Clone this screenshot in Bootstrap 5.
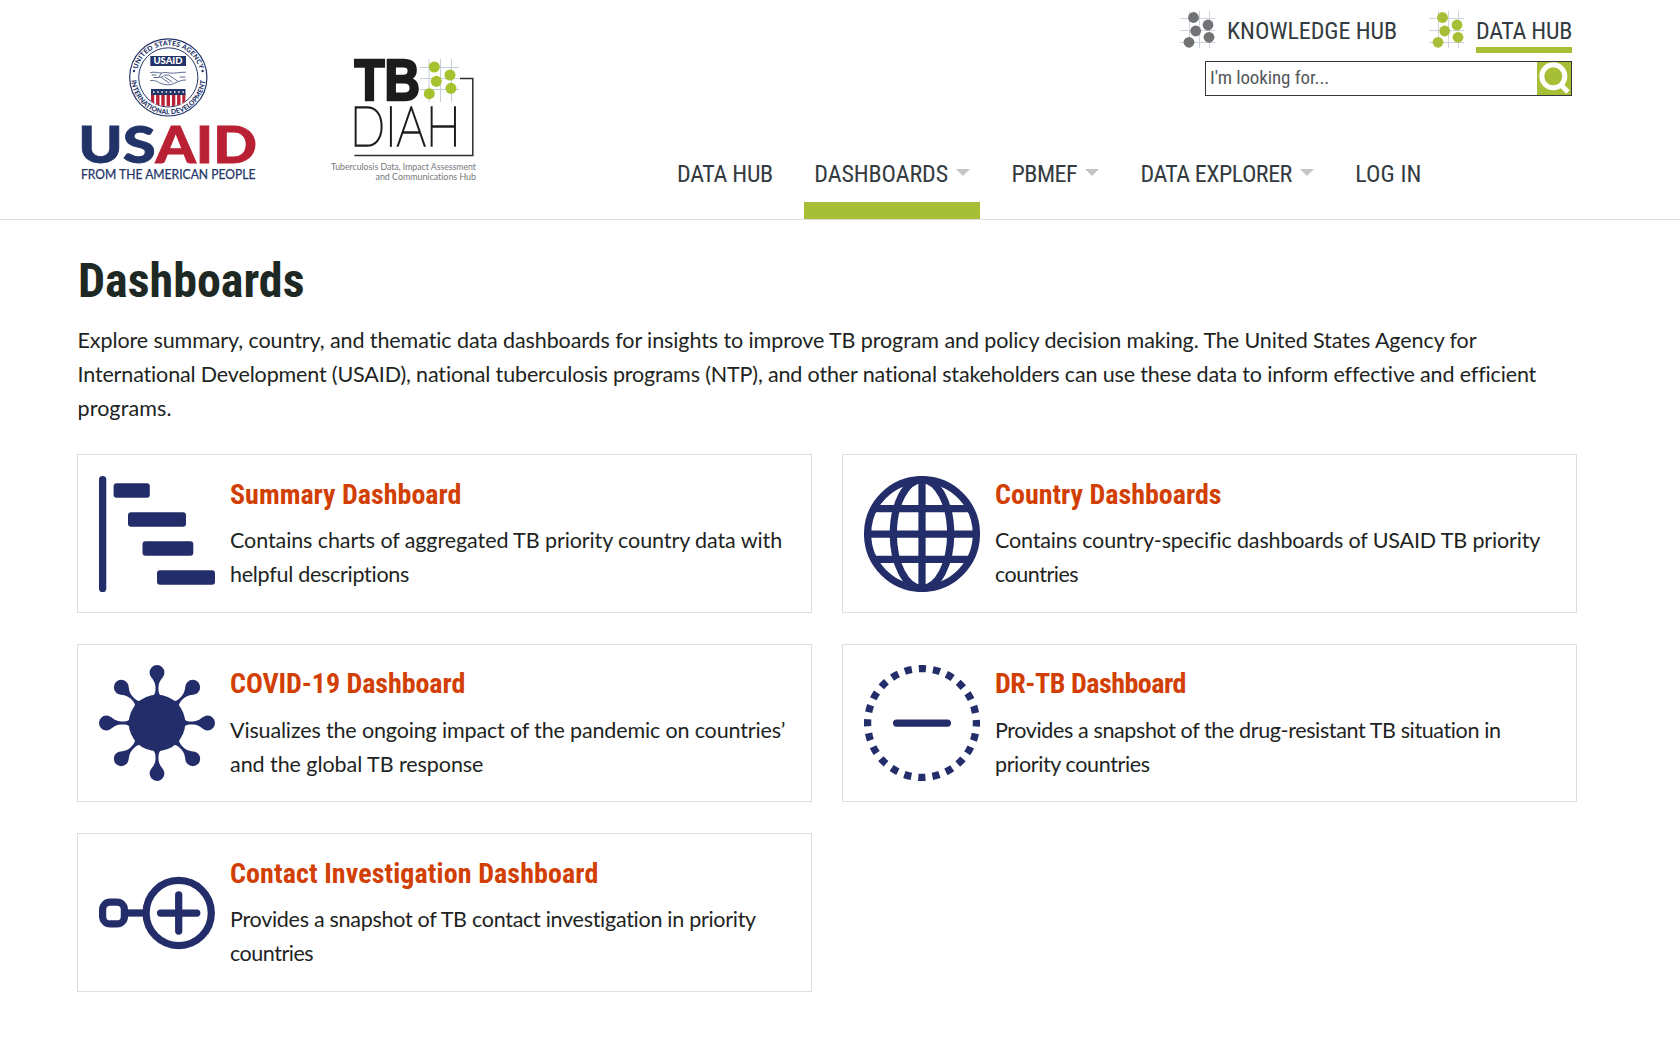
<!DOCTYPE html>
<html lang="en">
<head>
<meta charset="utf-8">
<meta name="viewport" content="width=device-width, initial-scale=1">
<title>Dashboards - TB DIAH</title>
<link href="https://cdn.jsdelivr.net/npm/bootstrap@5.3.0/dist/css/bootstrap.min.css" rel="stylesheet">
<style>
:root{--green:#a6bf36;--navy:#232d69;--orange:#d23f05}
body{font-family:Lato,sans-serif;color:#1d2422;background:#fff;font-size:21.5px;line-height:34px;overflow:hidden;font-variant-ligatures:none}
.cond{font-family:Roboto,sans-serif;font-stretch:75%;color:#343b40}
.site-header{height:220px;border-bottom:1px solid #ddd;padding-left:70px}
.site-header svg{overflow:visible}
.logo-usaid{width:200px;height:160px;margin-top:30px}
.logo-diah{width:170px;height:145px;margin:45px 0 0 50px}
.header-right{margin-left:177px}
.hub-row{height:60px;width:905px;padding-top:10px}
.hub-link{font-size:24px;line-height:42px;height:43px;white-space:nowrap}
.hub-link.current{border-bottom:6px solid var(--green)}
.hub-icon{width:38px;height:40px;margin-right:10.5px}
.hub-gray{color:#707274}
.hub-green{color:var(--green);margin-left:30.5px}
.search-box{width:367px;height:35px;margin-top:1px;margin-left:538px;border:1px solid #33373a}
.search-box input{font-size:19px;letter-spacing:-.1px;padding:0 0 0 4px;outline:0;min-width:0}
.search-box input::placeholder{color:#54595c;opacity:1}
.search-box svg{width:34px;height:33px}
.main-nav{gap:21.4px;margin-top:62px}
.main-nav a{height:61px;line-height:33px;font-size:24px;padding:0 10px;white-space:nowrap;text-decoration:none;border-bottom:17.5px solid transparent}
.main-nav a.current{border-color:var(--green)}
.main-nav i{width:0;height:0;border:7.5px solid transparent;border-top:7.5px solid #c4c4c4;border-bottom:0;margin:10.5px 0 0 8px}
.page-body{padding:0 103px 0 77px}
.page-body h1{font-size:48px;font-weight:700;line-height:56px;margin:33px 0 14px;color:#1f2924;padding-left:1px}
.intro{margin-bottom:29px;white-space:nowrap;padding-left:.5px}
.tile-grid{--bs-gutter-x:30px;--bs-gutter-y:31px}
.tile{height:158.5px;border:1px solid #dedede;padding:20.9px 0 0 21px}
.tile svg{width:116px;height:116px;margin-right:15px;flex:none;color:var(--navy)}
.tile h2{font-size:28px;font-weight:700;line-height:37px;margin:0 0 10.500px;color:var(--orange);white-space:nowrap}
.tile p{margin:0;white-space:nowrap}
.tk-a{letter-spacing:.1px}
.tk-b{letter-spacing:-.06px}
.tk-c{letter-spacing:-.09px}
.tk-d{letter-spacing:-.15px}
.tk-e{letter-spacing:-.28px}
.tk-f{letter-spacing:-.38px}
.tk-g{letter-spacing:-.48px}
</style>
<script src="https://cdn.jsdelivr.net/npm/bootstrap@5.3.0/dist/js/bootstrap.bundle.min.js"></script>
</head>
<body>
<svg class="d-none">
  <symbol id="molecule" viewBox="0 0 38 40">
    <path d="M10.500 1v37M20.500 1v37M30.500 1v37M1 8.500h35M1 20.500h35M1 32.500h35" stroke="#cdd3df" stroke-width="1" fill="none"/>
    <g fill="currentColor"><circle cx="14.500" cy="7.500" r="5.400"/><circle cx="29" cy="15" r="5.400"/><circle cx="16.700" cy="21" r="5.400"/><circle cx="30" cy="27.300" r="5.400"/><circle cx="10" cy="32.300" r="5.400"/></g>
  </symbol>
</svg>
<header class="site-header d-flex align-items-start">
  <svg class="logo-usaid flex-shrink-0" viewBox="0 0 200 160" font-family="Lato,sans-serif">
    <defs>
      <path id="arcTop" d="M66.300 47.400a32 32 0 0 1 64 0"/>
      <path id="arcBottom" d="M61.300 47.400a37 37 0 0 0 74 0"/>
      <path id="shield" d="M81 59h34.500v12q-3 4.500-17.200 5.500Q84 75.500 81 71z"/>
      <clipPath id="shieldClip"><use href="#shield"/></clipPath>
    </defs>
    <g fill="none" stroke="#223368"><circle cx="98.300" cy="47.400" r="38.600" stroke-width="1.200"/><circle cx="98.300" cy="47.400" r="29.600" stroke-width="1"/></g>
    <g fill="#223368" font-size="6.800" font-weight="900">
      <text><textPath href="#arcTop" startOffset="50%" text-anchor="middle" textLength="84">UNITED STATES AGENCY</textPath></text>
      <text><textPath href="#arcBottom" startOffset="50%" text-anchor="middle" textLength="110">INTERNATIONAL DEVELOPMENT</textPath></text>
    </g>
    <g fill="#223368"><circle cx="64" cy="41" r="1.200"/><circle cx="132.600" cy="41" r="1.200"/></g>
    <path fill="#223368" d="M80.300 26h35.700v10H80.300z"/>
    <text x="83.500" y="34.200" font-size="9" font-weight="900" fill="#fff" textLength="29" lengthAdjust="spacingAndGlyphs">USAID</text>
    <g fill="none" stroke="#4a5a85" stroke-width=".9" stroke-linecap="round"><path d="M80.500 42.500c5-1 7 .5 11 .5 3-.6 5-.8 8 0 6 .8 10-1 16-.8M80.500 50.500c5-.3 6 .8 9 2.200 3 1.700 8 2.800 12 1.700 5-1.300 7-4.200 14-4.400M91.500 43l-2.500 3.700c2 1.200 4 0 5.500-1.500l4-.2 9 6M95 47l7 5M92 48l7 5M82 45h4M110 47h5M84 47.500h5"/></g>
    <g clip-path="url(#shieldClip)"><path fill="#fff" d="M80 58h37v20H80z"/><path stroke="#b92034" stroke-width="3.400" d="M82.500 64v14M87.800 64v14M93 64v14M98.300 64v14M103.600 64v14M108.800 64v14M114 64v14"/><path fill="#223368" d="M80 59h37v6H80z"/><path d="M83 62h31" stroke="#fff" stroke-width="1.500" stroke-dasharray="1.500 2.700"/></g>
    <text x="8.300" y="132.500" font-size="51.500" font-weight="900" fill="#223368" stroke="#223368" stroke-width=".8" textLength="77.500" lengthAdjust="spacingAndGlyphs">US</text>
    <text x="85.500" y="132.500" font-size="51.500" font-weight="900" fill="#ba2033" stroke="#ba2033" stroke-width=".8" textLength="101.500" lengthAdjust="spacingAndGlyphs">AID</text>
    <text x="11" y="149.300" font-size="12.800" fill="#223368" stroke="#223368" stroke-width=".25" textLength="174.500" lengthAdjust="spacingAndGlyphs">FROM THE AMERICAN PEOPLE</text>
  </svg>
  <svg class="logo-diah flex-shrink-0" viewBox="0 0 170 145" font-family="Lato,sans-serif">
    <path d="M109 14v43M120.500 14v43M131.500 14v43M100 22.500h39M100 33.500h39M100 44.500h39" stroke="#c5ccda" fill="none"/>
    <text x="34.500" y="55" font-family="Liberation Sans,sans-serif" font-size="58" font-weight="700" fill="#1d1b1c" stroke="#1d1b1c" stroke-width="2.600" textLength="65.500" lengthAdjust="spacingAndGlyphs">TB</text>
    <g fill="#a6c32f"><circle cx="114.300" cy="22" r="5.500"/><circle cx="130" cy="30" r="5.500"/><circle cx="116.300" cy="36.300" r="5.500"/><circle cx="131" cy="43.300" r="5.500"/><circle cx="109.300" cy="48.700" r="5.500"/></g>
    <text x="30" y="101" font-size="56" font-weight="100" fill="#1d1b1c" stroke="#1d1b1c" stroke-width="1.700" textLength="110.500" lengthAdjust="spacingAndGlyphs">DIAH</text>
    <path d="M140 33.500h12.800v76.900H34.300" fill="none" stroke="#2d2d2d" stroke-width="1.500"/>
    <g font-size="10.300" fill="#77797c"><text x="11" y="124.500" textLength="145" lengthAdjust="spacingAndGlyphs">Tuberculosis Data, Impact Assessment</text><text x="55.500" y="135" textLength="100.500" lengthAdjust="spacingAndGlyphs">and Communications Hub</text></g>
  </svg>
  <div class="header-right">
    <div class="hub-row d-flex justify-content-end">
      <svg class="hub-icon hub-gray"><use href="#molecule"/></svg>
      <span class="hub-link cond tk-b">KNOWLEDGE HUB</span>
      <svg class="hub-icon hub-green"><use href="#molecule"/></svg>
      <span class="hub-link cond current tk-e">DATA HUB</span>
    </div>
    <form class="search-box d-flex">
      <input class="form-control border-0 rounded-0 shadow-none cond" type="text" placeholder="I'm looking for...">
      <svg class="flex-shrink-0" viewBox="0 0 34 33"><path fill="#a6bf36" d="M0 0h34v33H0z"/><circle cx="16.300" cy="14.300" r="11.500" fill="none" stroke="#fff" stroke-width="5"/><path d="M23.500 22.500l7.500 7.500" stroke="#fff" stroke-width="5"/></svg>
    </form>
    <nav class="main-nav d-flex">
      <a class="cond" href="#"><span class="tk-e">DATA HUB</span></a>
      <a class="cond current d-flex" href="#"><span class="tk-c">DASHBOARDS</span><i></i></a>
      <a class="cond d-flex" href="#"><span class="tk-g">PBMEF</span><i></i></a>
      <a class="cond d-flex" href="#"><span class="tk-g">DATA EXPLORER</span><i></i></a>
      <a class="cond" href="#"><span class="tk-a">LOG IN</span></a>
    </nav>
  </div>
</header>
<main class="page-body">
  <h1 class="cond">Dashboards</h1>
  <p class="intro"><span class="tk-c">Explore summary, country, and thematic data dashboards for insights to improve TB program and policy decision making. The United States Agency for</span><br><span class="tk-d">International Development (USAID), national tuberculosis programs (NTP), and other national stakeholders can use these data to inform effective and efficient</span><br><span class="tk-a">programs.</span></p>
  <div class="row tile-grid">
    <div class="col-6"><section class="tile d-flex">
      <svg viewBox="0 0 116 116" fill="currentColor"><rect width="7.300" height="116" rx="3.600"/><rect x="14.600" y="7.200" width="36.200" height="14.500" rx="3"/><rect x="29" y="36.200" width="58" height="14.500" rx="3"/><rect x="43.500" y="65.200" width="50.800" height="14.500" rx="3"/><rect x="58" y="94.200" width="58" height="14.500" rx="3"/></svg>
      <div><h2 class="cond">Summary Dashboard</h2><p><span class="tk-c">Contains charts of aggregated TB priority country data with</span><br><span class="tk-e">helpful descriptions</span></p></div>
    </section></div>
    <div class="col-6"><section class="tile d-flex">
      <svg viewBox="0 0 116 116" fill="none" stroke="currentColor" stroke-width="7.250"><circle cx="58" cy="58" r="54.400"/><ellipse cx="58" cy="58" rx="28.700" ry="54.400"/><path d="M58 2v112M2 58h112M10 32.500h96M10 83.300h96"/></svg>
      <div><h2 class="cond">Country Dashboards</h2><p><span class="tk-d">Contains country-specific dashboards of USAID TB priority</span><br><span class="tk-g">countries</span></p></div>
    </section></div>
    <div class="col-6"><section class="tile d-flex">
      <svg viewBox="0 0 116 116" fill="currentColor"><defs><path id="spike" d="M58 0a7.400 7.400 0 0 1 7.400 7.400c0 5.500-5.600 6.600-5.900 14.600-.1 4 0 7.500 3.500 9.500H53c3.500-2 3.600-5.500 3.500-9.500-.3-8-5.900-9.100-5.900-14.600A7.400 7.400 0 0 1 58 0z"/></defs><circle cx="58" cy="58" r="28.200"/><use href="#spike"/><use href="#spike" transform="rotate(45 58 58)"/><use href="#spike" transform="rotate(90 58 58)"/><use href="#spike" transform="rotate(135 58 58)"/><use href="#spike" transform="rotate(180 58 58)"/><use href="#spike" transform="rotate(225 58 58)"/><use href="#spike" transform="rotate(270 58 58)"/><use href="#spike" transform="rotate(315 58 58)"/></svg>
      <div><h2 class="cond"><span class="tk-b">COVID-19 Dashboard</span></h2><p><span class="tk-d">Visualizes the ongoing impact of the pandemic on countries’</span><br><span class="tk-b">and the global TB response</span></p></div>
    </section></div>
    <div class="col-6"><section class="tile d-flex">
      <svg viewBox="0 0 116 116" fill="none" stroke="currentColor" stroke-width="7.250"><circle cx="58" cy="58" r="54.400" stroke-dasharray="7.250 6.992" stroke-dashoffset="3.625"/><path d="M32.600 58h50.800" stroke-linecap="round"/></svg>
      <div><h2 class="cond"><span class="tk-g">DR-TB Dashboard</span></h2><p><span class="tk-f">Provides a snapshot of the drug-resistant TB situation in</span><br><span class="tk-f">priority countries</span></p></div>
    </section></div>
    <div class="col-6"><section class="tile d-flex">
      <svg viewBox="0 0 116 116" fill="none" stroke="currentColor" stroke-width="7.250"><circle cx="79.700" cy="58" r="32.600"/><rect x="3.600" y="47.100" width="21.800" height="21.800" rx="7.500"/><path d="M27 58h19"/><path d="M61.600 58h36.200M79.700 39.900v36.200" stroke-linecap="round"/></svg>
      <div><h2 class="cond"><span class="tk-a">Contact Investigation Dashboard</span></h2><p><span class="tk-e">Provides a snapshot of TB contact investigation in priority</span><br><span class="tk-g">countries</span></p></div>
    </section></div>
  </div>
</main>
</body>
</html>
